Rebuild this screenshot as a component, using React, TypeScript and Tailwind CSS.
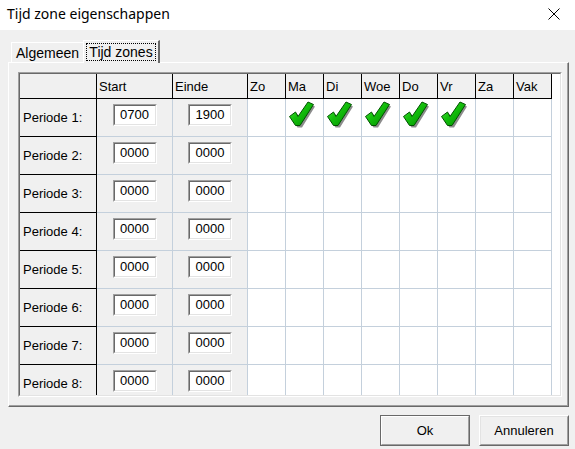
import { Fragment } from "react";

type Period = { start: string; end: string; days: boolean[] };

const dayNames = ["Zo", "Ma", "Di", "Woe", "Do", "Vr", "Za", "Vak"];

const periods: Period[] = [
  { start: "0700", end: "1900", days: [false, true, true, true, true, true, false, false] },
  ...Array.from({ length: 7 }, () => ({ start: "0000", end: "0000", days: Array(8).fill(false) })),
];

function CheckMark() {
  return (
    <svg width="26" height="27" viewBox="0 0 26 27">
      <defs>
        <linearGradient id="chk" x1="0" y1="0" x2="1" y2="1">
          <stop offset="0" stopColor="#5cf04c" />
          <stop offset="0.45" stopColor="#14c00c" />
          <stop offset="1" stopColor="#008a00" />
        </linearGradient>
      </defs>
      <polygon points="2.5,17.5 8.5,13 11,17.5 21,3 26,5.5 13,26.5 8.5,26.5" fill="#8c8c8c" />
      <polygon
        points="0.5,15.5 6.5,11 9,15.5 19,1 24.5,3.5 11,24.5 6.5,24.5"
        fill="url(#chk)"
        stroke="#005200"
        strokeWidth="1"
        strokeLinejoin="round"
      />
    </svg>
  );
}

function TimeBox({ value }: { value: string }) {
  return (
    <div className="w-[44px] h-[22px] border-t border-l border-t-[#a0a0a0] border-l-[#a0a0a0] border-r border-b border-r-white border-b-white">
      <div className="h-full flex items-center justify-center bg-white border-t border-l border-t-[#696969] border-l-[#696969] border-r border-b border-r-[#e3e3e3] border-b-[#e3e3e3] text-[13px] text-black">
        {value}
      </div>
    </div>
  );
}

export default function App() {
  const grid = "grid grid-cols-[77px_76px_75px_repeat(8,38px)] grid-rows-[25px_repeat(8,38px)]";

  return (
    <div className="w-[575px] h-[449px] bg-[#f0f0f0] flex flex-col overflow-hidden font-['Liberation_Sans',Arial,sans-serif] text-black">
      {/* title bar */}
      <div className="h-[30px] bg-white flex items-center justify-between pl-[7px] pr-[15px]">
        <span className="text-[14px] font-['Noto_Sans',sans-serif] leading-none pb-[2px]">Tijd zone eigenschappen</span>
        <svg width="12" height="12" viewBox="0 0 12 12" className="mb-[2px]">
          <path d="M0.5 0.5 L11.5 11.5 M11.5 0.5 L0.5 11.5" stroke="#000" strokeWidth="1" />
        </svg>
      </div>

      {/* tabs */}
      <div className="h-[32px] flex items-end pl-[11px]">
        <div className="w-[72px] h-[20px] border-t border-l border-white flex items-center justify-center text-[14px] leading-none">
          Algemeen
        </div>
        <div className="relative z-10 -mb-px w-[77px] h-[23px] bg-[#f0f0f0] border-t border-l border-white border-r-2 border-r-[#696969] flex items-start justify-center pt-[2px]">
          <div className="w-[70px] h-[18px] border border-dotted border-black flex items-center justify-center text-[14px] leading-none">
            Tijd zones
          </div>
        </div>
      </div>

      {/* tab page */}
      <div className="ml-[8px] w-[561px] h-[345px] border-t border-l border-white border-r border-b border-r-[#696969] border-b-[#696969]">
        <div className="h-full border-r border-b border-r-[#a0a0a0] border-b-[#a0a0a0] pl-[9px] pt-[9px]">
          <div className="w-[544px] h-[325px] border-t border-l border-t-[#a0a0a0] border-l-[#a0a0a0] border-r border-b border-r-white border-b-white">
            <div className="h-full bg-white overflow-hidden border-t border-l border-t-[#696969] border-l-[#696969] border-r border-b border-r-[#e3e3e3] border-b-[#e3e3e3] text-[13px]">
              <div className={grid}>
                <div className="bg-[#f0f0f0] border-r border-b border-black" />
                {["Start", "Einde", ...dayNames].map((h) => (
                  <div key={h} className="bg-[#f0f0f0] border-r border-b border-black pl-[2px] flex items-center pt-[1px]">
                    {h}
                  </div>
                ))}

                {periods.map((p, i) => (
                  <Fragment key={i}>
                    <div className="bg-[#f0f0f0] border-r border-b border-black pl-[3px] flex items-center pt-[1px]">
                      Periode {i + 1}:
                    </div>
                    <div className="bg-[#f0f0f0] border-r border-b border-[#c4d0dc] flex justify-center pt-[5px]">
                      <TimeBox value={p.start} />
                    </div>
                    <div className="bg-[#f0f0f0] border-r border-b border-[#c4d0dc] flex justify-center pt-[5px]">
                      <TimeBox value={p.end} />
                    </div>
                    {p.days.map((on, d) => (
                      <div key={d} className="bg-white border-r border-b border-[#c4d0dc] pl-[3px] pt-[2px]">
                        {on && <CheckMark />}
                      </div>
                    ))}
                  </Fragment>
                ))}
              </div>
            </div>
          </div>
        </div>
      </div>

      {/* buttons */}
      <div className="flex justify-end gap-[9px] pr-[6px] pt-[8px]">
        <button className="w-[90px] h-[31px] border border-[#696969] text-[13px]">
          <div className="h-full flex items-center justify-center border-t border-l border-white border-r border-b border-r-[#a0a0a0] border-b-[#a0a0a0]">
            Ok
          </div>
        </button>
        <button className="w-[90px] h-[31px] border-t border-l border-white border-r border-b border-r-[#696969] border-b-[#696969] text-[13px]">
          <div className="h-full flex items-center justify-center border-t border-l border-[#e3e3e3] border-r border-b border-r-[#a0a0a0] border-b-[#a0a0a0]">
            Annuleren
          </div>
        </button>
      </div>
    </div>
  );
}
